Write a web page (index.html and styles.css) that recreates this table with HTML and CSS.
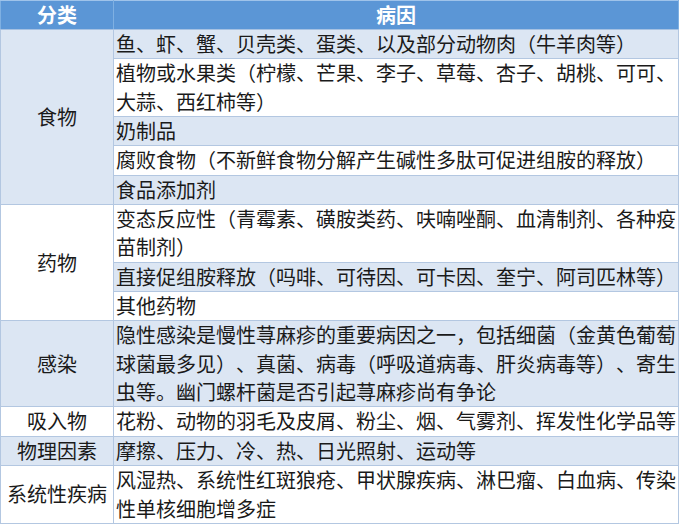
FILE: index.html
```html
<!DOCTYPE html>
<html lang="zh">
<head>
<meta charset="utf-8">
<link rel="stylesheet" href="styles.css">
</head>
<body>
<table class="causes">
  <colgroup><col class="c-cat"><col class="c-cause"></colgroup>
  <thead>
    <tr class="head"><th>分类</th><th>病因</th></tr>
  </thead>
  <tbody>
    <tr class="b"><td class="cat" rowspan="5">食物</td><td>鱼、虾、蟹、贝壳类、蛋类、以及部分动物肉（牛羊肉等）</td></tr>
    <tr class="w"><td>植物或水果类（柠檬、芒果、李子、草莓、杏子、胡桃、可可、大蒜、西红柿等）</td></tr>
    <tr class="b"><td>奶制品</td></tr>
    <tr class="w"><td>腐败食物（不新鲜食物分解产生碱性多肽可促进组胺的释放）</td></tr>
    <tr class="b"><td>食品添加剂</td></tr>
    <tr class="w"><td class="cat" rowspan="3">药物</td><td>变态反应性（青霉素、磺胺类药、呋喃唑酮、血清制剂、各种疫苗制剂）</td></tr>
    <tr class="b"><td>直接促组胺释放（吗啡、可待因、可卡因、奎宁、阿司匹林等）</td></tr>
    <tr class="w"><td>其他药物</td></tr>
    <tr class="b"><td class="cat">感染</td><td>隐性感染是慢性荨麻疹的重要病因之一，包括细菌（金黄色葡萄球菌最多见）、真菌、病毒（呼吸道病毒、肝炎病毒等）、寄生虫等。幽门螺杆菌是否引起荨麻疹尚有争论</td></tr>
    <tr class="w"><td class="cat">吸入物</td><td>花粉、动物的羽毛及皮屑、粉尘、烟、气雾剂、挥发性化学品等</td></tr>
    <tr class="b"><td class="cat">物理因素</td><td>摩擦、压力、冷、热、日光照射、运动等</td></tr>
    <tr class="w"><td class="cat">系统性疾病</td><td>风湿热、系统性红斑狼疮、甲状腺疾病、淋巴瘤、白血病、传染性单核细胞增多症</td></tr>
  </tbody>
</table>
</body>
</html>
```

FILE: styles.css
```css
html, body {
  margin: 0;
  padding: 0;
  background: #ffffff;
}

.causes {
  width: 678px;
  border-collapse: collapse;
  table-layout: fixed;
  font-family: "Noto Sans CJK SC", "Noto Sans", sans-serif;
  font-size: 20px;
  color: #1a1a1a;
  text-spacing-trim: space-all;
  border-top: 1px solid #9fc3ea;
}

.c-cat { width: 113px; }
.c-cause { width: 565px; }

.causes th,
.causes td {
  border: 1px solid #b3c7e1;
  padding: 0 0 0 2px;
  vertical-align: middle;
  text-align: left;
  line-height: 28.35px;
  font-weight: normal;
}

.head th {
  background: #5b96d6;
  color: #ffffff;
  font-weight: bold;
  text-align: center;
  line-height: 28px;
  padding: 0;
  border-color: #7fb0e2;
  border-top-color: #9fc3ea;
  border-bottom-color: #a6c1e2;
}

.causes td.cat {
  text-align: center;
  padding: 0;
}

.b { background: #dce6f3; }
.w { background: #ffffff; }
```
